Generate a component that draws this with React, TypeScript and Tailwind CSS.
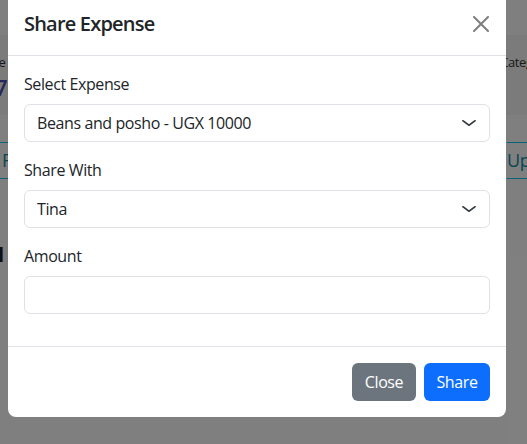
import React from "react";

const font = { fontFamily: '"Segoe UI", "Open Sans", "Liberation Sans", sans-serif' };

function Chevron() {
  return (
    <svg width="16" height="12" viewBox="0 0 16 16" preserveAspectRatio="none" className="shrink-0">
      <path d="m2 5 6 6 6-6" fill="none" stroke="#343a40" strokeWidth="2" strokeLinecap="round" strokeLinejoin="round" />
    </svg>
  );
}

function SelectBox({ value }: { value: string }) {
  return (
    <div className="flex h-[38px] items-center justify-between rounded-[6px] border border-[#dee2e6] bg-white pl-[12px] pr-[12px] text-[16px] text-[#212529]">
      <span>{value}</span>
      <Chevron />
    </div>
  );
}

export default function App() {
  return (
    <div className="relative h-[444px] w-[527px] overflow-hidden bg-white tracking-[-0.4px]" style={font}>
      {/* underlying page */}
      <div className="flex flex-col">
        <div className="h-[35px] bg-white" />
        <div className="flex h-[80px] justify-between bg-[#f6f6f7]">
          <div className="flex flex-col items-start pt-[19px]">
            <span className="-ml-[22px] text-[13px] leading-[16px] text-[#333]">Type</span>
            <span className="-ml-[5px] mt-[4px] text-[22px] font-semibold leading-[26px] text-[#4a4fb0]">7</span>
          </div>
          <div className="-mr-[24px] flex flex-col pt-[19px]">
            <span className="text-[13px] leading-[16px] text-[#333]">Category</span>
          </div>
        </div>
        <div className="h-[27px] bg-white" />
        <div className="flex h-[37px] justify-between">
          <div className="-ml-[30px] flex items-center border-y border-[#0dcaf0] pl-[32px] pr-[10px] text-[18px] text-[#0e8ca6]">Fi</div>
          <div className="-mr-[40px] flex w-[60px] items-center border-y border-[#0dcaf0] text-[18px] text-[#0e8ca6]">Update</div>
        </div>
        <div className="mt-[64px] -ml-[2px] text-[20px] font-bold leading-[24px] text-[#222]">l</div>
      </div>

      {/* backdrop + modal */}
      <div className="absolute inset-0 bg-black/50">
        <div className="ml-[8px] mt-[-7px] w-[498px] rounded-[8px] bg-white">
          <div className="flex items-center justify-between border-b border-[#dee2e6] p-[16px]">
            <h5 className="text-[20px] font-semibold leading-[30px] tracking-[-0.8px] text-[#212529]">Share Expense</h5>
            <button className="mr-[1px] flex h-[16px] w-[16px] items-center justify-center opacity-50">
              <svg width="16" height="16" viewBox="0 0 16 16">
                <path
                  fill="#000"
                  d="M.293.293a1 1 0 0 1 1.414 0L8 6.586 14.293.293a1 1 0 1 1 1.414 1.414L9.414 8l6.293 6.293a1 1 0 0 1-1.414 1.414L8 9.414l-6.293 6.293a1 1 0 0 1-1.414-1.414L6.586 8 .293 1.707a1 1 0 0 1 0-1.414z"
                />
              </svg>
            </button>
          </div>
          <div className="flex flex-col p-[16px] text-[16px] leading-[24px] text-[#212529]">
            <label className="mb-[8px]">Select Expense</label>
            <SelectBox value="Beans and posho - UGX 10000" />
            <label className="mb-[8px] mt-[16px]">Share With</label>
            <SelectBox value="Tina" />
            <label className="mb-[8px] mt-[16px]">Amount</label>
            <div className="mb-[16px] h-[38px] rounded-[6px] border border-[#dee2e6] bg-white" />
          </div>
          <div className="flex justify-end gap-[8px] border-t border-[#dee2e6] px-[16px] py-[16px]">
            <button className="h-[38px] w-[64px] rounded-[6px] bg-[#6c757d] text-[16px] text-white">Close</button>
            <button className="h-[38px] w-[66px] rounded-[6px] bg-[#0d6efd] text-[16px] text-white">Share</button>
          </div>
        </div>
      </div>
    </div>
  );
}
